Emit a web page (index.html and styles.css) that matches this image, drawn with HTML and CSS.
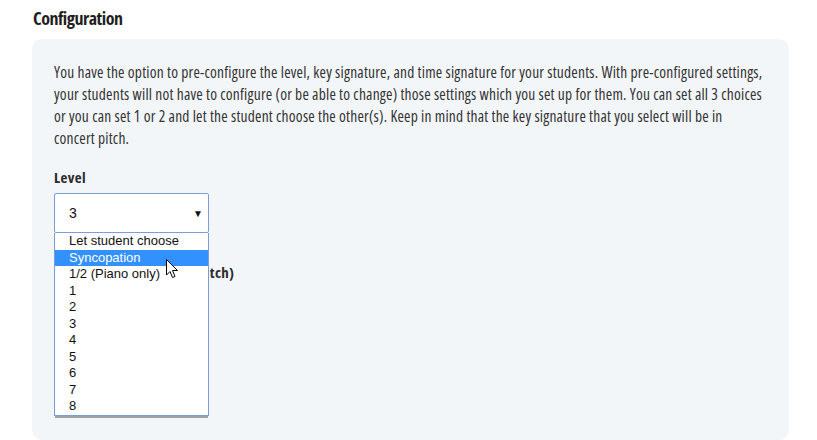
FILE: index.html
```html
<!DOCTYPE html>
<html lang="en">
<head>
<meta charset="utf-8">
<title>Configuration</title>
<link rel="stylesheet" href="styles.css">
</head>
<body>
<div class="page">
  <h2 class="title">Configuration</h2>
  <section class="panel">
    <p class="intro">You have the option to pre-configure the level, key signature, and time signature for your students. With pre-configured settings,<br>your students will not have to configure (or be able to change) those settings which you set up for them. You can set all 3 choices<br>or you can set 1 or 2 and let the student choose the other(s). Keep in mind that the key signature that you select will be in<br>concert pitch.</p>
    <div class="field">
      <label class="label">Level</label>
      <div class="select-wrap">
        <div class="select"><span>3</span><span class="arrow">&#9660;</span></div>
        <ul class="listbox">
          <li>Let student choose</li>
          <li class="hl">Syncopation</li>
          <li>1/2 (Piano only)</li>
          <li>1</li>
          <li>2</li>
          <li>3</li>
          <li>4</li>
          <li>5</li>
          <li>6</li>
          <li>7</li>
          <li>8</li>
        </ul>
        <svg class="cursor" width="13" height="20" viewBox="0 0 13 20"><path d="M0.5 0.5 L0.5 16 L4 12.5 L6.5 18.5 L9 17.5 L6.5 11.5 L11.5 11.5 Z" fill="#fff" stroke="#000" stroke-width="1" stroke-linejoin="miter"/></svg>
      </div>
    </div>
    <div class="field field-key">
      <label class="label">Key Signature (Concert Pitch)</label>
      <div class="select"><span>Let student choose</span></div>
    </div>
  </section>
</div>
</body>
</html>
```

FILE: styles.css
```css
html, body {
  margin: 0;
  padding: 0;
  background: #ffffff;
}
body {
  font-family: "Open Sans", "Noto Sans", "Liberation Sans", sans-serif;
  color: #333333;
}
.page {
  padding: 0 28px 0 32px;
}
.title {
  margin: 0;
  padding: 7px 0 0 1px;
  height: 39px;
  box-sizing: border-box;
  font-size: 18px;
  font-stretch: 75%;
  letter-spacing: -0.5px;
  line-height: 22px;
  font-weight: bold;
  color: #1f1f1f;
}
.panel {
  background: #f3f6f9;
  border-radius: 10px;
  padding: 22px 8px 0 22px;
  height: 401px;
  box-sizing: border-box;
}
.intro {
  margin: 0;
  font-size: 15.5px;
  font-stretch: 75%;
  letter-spacing: 0.21px;
  line-height: 22px;
  white-space: nowrap;
  color: #333333;
}
.field {
  display: flex;
  flex-direction: column;
  align-items: flex-start;
}
.label {
  display: block;
  margin-top: 17px;
  font-size: 15px;
  font-stretch: 75%;
  letter-spacing: 0.4px;
  line-height: 22px;
  font-weight: bold;
  color: #2b2b2b;
}
.select-wrap {
  position: relative;
  margin-top: 5px;
}
.select {
  width: 155px;
  height: 40px;
  box-sizing: border-box;
  border: 1px solid #7b9ed9;
  border-radius: 2px;
  background: #ffffff;
  display: flex;
  align-items: center;
  justify-content: space-between;
  padding: 0 5px 0 14px;
  font-family: "Liberation Sans", Arial, sans-serif;
  font-size: 14px;
  color: #111111;
}
.arrow {
  font-size: 10px;
  color: #111111;
}
.listbox {
  position: absolute;
  left: 0;
  top: 40px;
  width: 155px;
  margin: 0;
  padding: 0;
  list-style: none;
  box-sizing: border-box;
  background: #ffffff;
  border: 1px solid #7b9ed9;
  border-top: none;
  box-shadow: 0 3px 0 -1px #a0a0a0;
  font-family: "Liberation Sans", Arial, sans-serif;
  font-size: 13px;
  color: #111111;
  z-index: 5;
}
.listbox li {
  height: 16.5px;
  line-height: 16.5px;
  padding-left: 14px;
  white-space: nowrap;
}
.listbox li.hl {
  background: #3390ff;
  color: #ffffff;
}
.cursor {
  position: absolute;
  left: 112px;
  top: 66px;
  z-index: 6;
}
.field-key .label {
  margin-top: 28px;
}
.field-key .select {
  margin-top: 5px;
}
```
